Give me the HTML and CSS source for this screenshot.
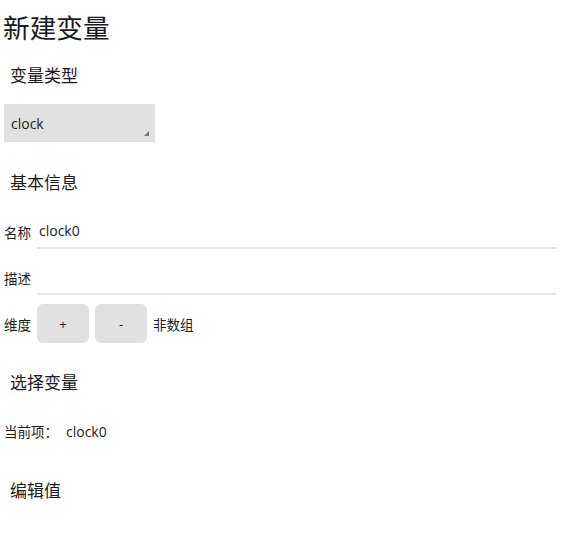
FILE: index.html
```html
<!DOCTYPE html>
<html lang="zh-CN">
<head>
<meta charset="utf-8">
<title>新建变量</title>
<link rel="stylesheet" href="styles.css">
</head>
<body>
<main class="page">
  <h1 class="page-title">新建变量</h1>

  <h2 class="section-title section-type">变量类型</h2>
  <div class="select">
    <span class="select-value">clock</span>
    <span class="select-grip"></span>
  </div>

  <h2 class="section-title section-basic">基本信息</h2>
  <div class="field field-name">
    <span class="field-label">名称</span>
    <span class="field-input">clock0</span>
  </div>
  <div class="field field-desc">
    <span class="field-label">描述</span>
    <span class="field-input"></span>
  </div>
  <div class="dims">
    <span class="field-label">维度</span>
    <button class="btn" type="button">+</button>
    <button class="btn" type="button">-</button>
    <span class="dims-state">非数组</span>
  </div>

  <h2 class="section-title section-pick">选择变量</h2>
  <div class="current">
    <span class="current-label">当前项：</span>
    <span class="current-value">clock0</span>
  </div>

  <h2 class="section-title section-edit">编辑值</h2>
</main>
</body>
</html>
```

FILE: styles.css
```css
html, body {
  margin: 0;
  padding: 0;
  background: #ffffff;
}

body {
  font-family: "Open Sans", "Noto Sans CJK SC", sans-serif;
  color: #1b1b1b;
  width: 570px;
  height: 542px;
  overflow: hidden;
}

.page {
  display: flex;
  flex-direction: column;
  align-items: flex-start;
  padding: 0 14px 0 4px;
}

.page-title {
  margin: 0 0 0 -1px;
  height: 56px;
  line-height: 56px;
  font-size: 26.67px;
  font-weight: 400;
}

.section-title {
  margin: 0;
  padding-left: 6px;
  height: 24px;
  line-height: 24px;
  font-size: 17px;
  font-weight: 400;
}

.section-type { margin-top: 8px; }
.section-basic { margin-top: 29px; }
.section-pick { margin-top: 28px; }
.section-edit { margin-top: 37px; }

/* combo box */
.select {
  position: relative;
  margin-top: 16px;
  width: 151px;
  height: 38px;
  background: #e1e1e1;
  display: flex;
  align-items: center;
  box-sizing: border-box;
  padding-left: 7px;
  font-size: 14px;
}

.select-grip {
  position: absolute;
  right: 6px;
  bottom: 6px;
  width: 0;
  height: 0;
  border-left: 5px solid transparent;
  border-bottom: 5px solid #777777;
}

/* labelled text fields */
.field {
  align-self: stretch;
  display: flex;
  align-items: center;
  font-size: 14px;
}

.field-name { margin-top: 20px; }
.field-desc { margin-top: 12px; }

.field-label {
  width: 33px;
  font-size: 13.5px;
  flex: none;
}

.field-input {
  flex: 1;
  height: 32px;
  line-height: 32px;
  padding-left: 2px;
  border-bottom: 2px solid #e4e4e4;
}

/* dimension buttons */
.dims {
  margin-top: 9px;
  display: flex;
  align-items: center;
  gap: 6px;
  font-size: 14px;
}

.dims .field-label {
  width: 27px;
}

.btn {
  width: 52px;
  height: 39px;
  border: none;
  border-radius: 6px;
  background: #e1e1e1;
  color: #1b1b1b;
  font-family: inherit;
  font-size: 13px;
  padding: 0;
}

.dims-state {
  font-size: 13.5px;
}

/* current selection */
.current {
  margin-top: 27px;
  height: 20px;
  line-height: 20px;
  display: flex;
  font-size: 14px;
}

.current-label {
  width: 62px;
  font-size: 13.5px;
}
```
